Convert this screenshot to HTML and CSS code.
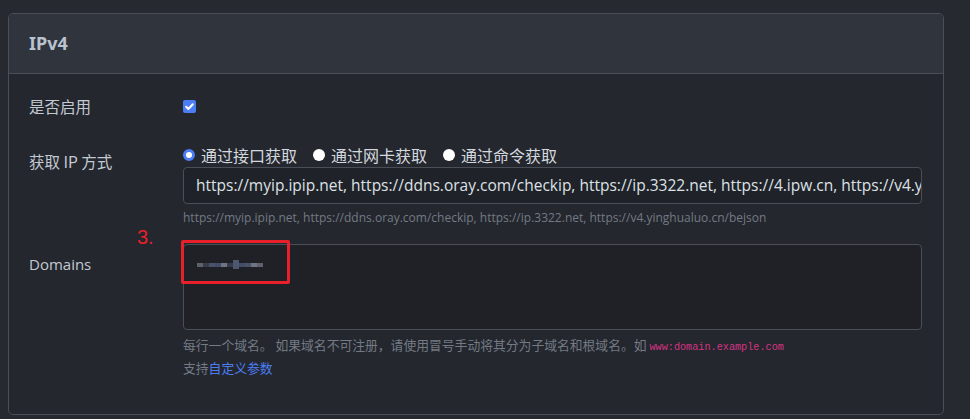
FILE: index.html
```html
<!DOCTYPE html>
<html lang="zh-CN">
<head>
<meta charset="utf-8">
<title>IPv4</title>
<link rel="stylesheet" href="styles.css">
</head>
<body>
<div class="card">
  <div class="card-header">IPv4</div>
  <div class="card-body">
    <div class="row row-enable">
      <div class="label">是否启用</div>
      <div class="control">
        <span class="checkbox"><svg viewBox="0 0 13 13" width="13" height="13"><path d="M3.2 6.8 L5.4 9 L9.8 4.2" fill="none" stroke="#fff" stroke-width="2" stroke-linecap="round" stroke-linejoin="round"/></svg></span>
      </div>
    </div>
    <div class="row row-ip">
      <div class="label label-ip">获取 IP 方式</div>
      <div class="control">
        <div class="radios">
          <label class="radio"><span class="dot checked"></span>通过接口获取</label>
          <label class="radio"><span class="dot"></span>通过网卡获取</label>
          <label class="radio"><span class="dot"></span>通过命令获取</label>
        </div>
        <div class="input">https://myip.ipip.net, https://ddns.oray.com/checkip, https://ip.3322.net, https://4.ipw.cn, https://v4.yinghualuo.cn/bejson</div>
        <div class="help">https://myip.ipip.net, https://ddns.oray.com/checkip, https://ip.3322.net, https://v4.yinghualuo.cn/bejson</div>
      </div>
    </div>
    <div class="row row-domains">
      <div class="label label-domains">Domains</div>
      <div class="control">
        <div class="textarea-wrap">
          <div class="textarea">
            <div class="pixels"><i class="p1"></i><i class="p2"></i><i class="p3"></i><i class="p4"></i><i class="p5"></i><i class="p2"></i><i class="p6"></i><i class="p4"></i><i class="p3"></i><i class="p5"></i><i class="p1"></i></div>
          </div>
          <span class="annot-num">3.</span>
          <span class="annot-box"></span>
        </div>
        <div class="help help-domains">
          <div>每行一个域名。 如果域名不可注册，请使用冒号手动将其分为子域名和根域名。如 <code>www:domain.example.com</code></div>
          <div>支持<a class="link">自定义参数</a></div>
        </div>
      </div>
    </div>
  </div>
</div>
</body>
</html>
```
FILE: styles.css
```css
html, body {
  margin: 0;
  padding: 0;
  background: #262930;
}
body {
  padding: 13px 26px 0 8px;
  font-family: "Segoe UI", "Noto Sans", "Noto Sans CJK SC", sans-serif;
  color: #c3c9d3;
}
.card {
  border: 1px solid #4a4e56;
  border-radius: 5px;
  background: #24272e;
  overflow: hidden;
}
.card-header {
  background: #30343c;
  border-bottom: 1px solid #4a4e56;
  height: 59px;
  line-height: 59px;
  padding-left: 20px;
  font-size: 18px;
  font-weight: 700;
  color: #b9c2cf;
}
.card-body {
  padding: 21px 21px 36px 20px;
}
.row {
  display: flex;
}
.label {
  width: 154px;
  flex: none;
  font-size: 15.5px;
  line-height: 22px;
  font-family: "Noto Sans CJK SC", sans-serif;
}
.control {
  flex: 1;
  min-width: 0;
}
.row-enable {
  height: 22px;
  align-items: center;
}
.checkbox {
  display: block;
  width: 13px;
  height: 13px;
  border-radius: 2px;
  background: #4b7df5;
}
.checkbox svg { display: block; }
.row-ip {
  margin-top: 27px;
}
.label-ip {
  padding-top: 6px;
}
.radios {
  display: flex;
  height: 22px;
  align-items: center;
  margin-bottom: 1px;
  font-family: "Noto Sans CJK SC", sans-serif;
  font-size: 16px;
  color: #d3d8df;
}
.radio {
  display: flex;
  align-items: center;
  margin-right: 16px;
}
.dot {
  width: 12px;
  height: 12px;
  border-radius: 50%;
  background: #fff;
  margin-right: 6px;
  box-sizing: border-box;
}
.dot.checked {
  border: 3px solid #4b7df5;
}
.input {
  height: 37px;
  box-sizing: border-box;
  border: 1px solid #4a4e56;
  border-radius: 4px;
  background: #1f2228;
  padding: 0 12px;
  line-height: 35px;
  font-size: 15.5px;
  color: #dde1e6;
  white-space: nowrap;
  overflow: hidden;
  font-family: "Segoe UI", "Open Sans", sans-serif;
}
.help {
  margin-top: 5px;
  font-size: 12px;
  line-height: 18px;
  color: #737a84;
  font-family: "Segoe UI", "Open Sans", "Noto Sans CJK SC", sans-serif;
  white-space: nowrap;
}
.row-domains {
  margin-top: 17px;
}
.label-domains {
  padding-top: 9px;
  font-family: "Segoe UI", "Open Sans", sans-serif;
  font-size: 15px;
}
.textarea-wrap {
  position: relative;
}
.textarea {
  height: 86px;
  box-sizing: border-box;
  border: 1px solid #4a4e56;
  border-radius: 4px;
  background: #1f2127;
  padding: 15px 12px 0 13px;
}
.pixels {
  display: flex;
  align-items: center;
  height: 9px;
}
.pixels i {
  display: block;
  width: 6px;
  height: 4px;
  opacity: 0.85;
}
.pixels .p1 { background: #6a6e78; }
.pixels .p2 { background: #3b4150; }
.pixels .p3 { background: #525a72; }
.pixels .p4 { background: #4a5578; }
.pixels .p5 { background: #7c8294; }
.pixels .p6 { background: #56607e; height: 9px; }
.annot-num {
  position: absolute;
  left: -46px;
  top: -18px;
  color: #e8202a;
  font-size: 20px;
  font-family: "Liberation Sans", sans-serif;
}
.annot-box {
  position: absolute;
  left: -2px;
  top: -4px;
  width: 103px;
  height: 38px;
  border: 3px solid #e8202a;
  border-radius: 2px;
}
.help-domains {
  font-family: "Noto Sans CJK SC", sans-serif;
  font-size: 12.8px;
  line-height: 20px;
  margin-top: 5px;
}
code {
  font-family: "Liberation Mono", "DejaVu Sans Mono", monospace;
  font-size: 10.2px;
  color: #d63384;
}
.link {
  color: #4c7ef3;
}
```
